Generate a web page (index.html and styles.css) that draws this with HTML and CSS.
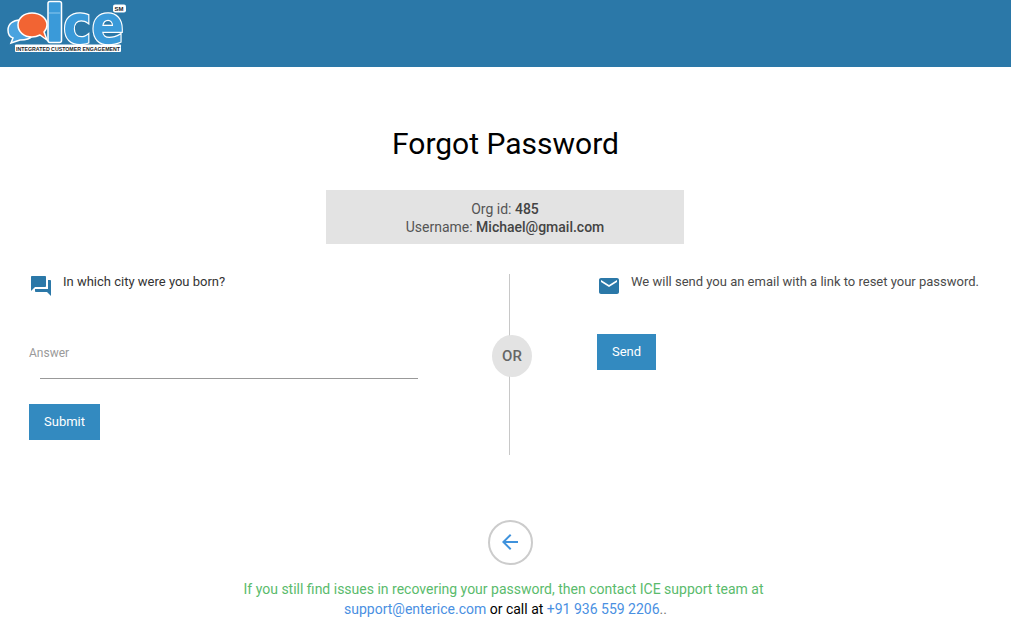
FILE: index.html
```html
<!DOCTYPE html>
<html lang="en">
<head>
  <meta charset="UTF-8">
  <title>Forgot Password</title>
  <link rel="stylesheet" href="styles.css">
</head>
<body>
  <header class="topbar">
    <svg class="logo" width="130" height="56" viewBox="0 0 130 56">
      <!-- blue bubble behind -->
      <path d="M20 20c-7 0-12 4-12 10 0 4 2 7 5 8l-2 5 9-3c4 0 10-1 12-4z" fill="#4aa3df" stroke="#fff" stroke-width="1.500"/>
      <!-- orange bubble -->
      <path d="M32 13c-8 0-14 5-14 12s6 12 14 12c3 0 6-1 8-2l7 5-3-8c2-2 3-4 3-7 0-7-7-12-15-12z" fill="#f26433" stroke="#fff" stroke-width="1.500"/>
      <rect x="48" y="1.500" width="13.500" height="41" rx="2" fill="#3a9ad9" stroke="#fff" stroke-width="1.500"/>
      <path d="M49 13h11" stroke="#8cc8ee" stroke-width="1"/>
      <text class="logo-ce" x="63" y="43" textLength="61" lengthAdjust="spacingAndGlyphs">ce</text>
      <rect x="15" y="44.500" width="106" height="7.500" rx="1" fill="#fff"/>
      <text class="logo-tag" x="16" y="50.500" textLength="104" lengthAdjust="spacingAndGlyphs">INTEGRATED CUSTOMER ENGAGEMENT</text>
      <rect x="113" y="4.500" width="13" height="8" rx="2" fill="#fff"/>
      <text class="logo-sm" x="114.500" y="11">SM</text>
    </svg>
  </header>

  <main class="page">
    <h1 class="title">Forgot Password</h1>

    <div class="org-box">
      <div>Org id: <b>485</b></div>
      <div>Username: <b>Michael@gmail.com</b></div>
    </div>

    <section class="options">
      <div class="col-left">
        <div class="hint">
          <svg width="24" height="24" viewBox="0 0 24 24"><path fill="#2b78a8" d="M21 6h-2v9H6v2c0 .55.45 1 1 1h11l4 4V7c0-.55-.45-1-1-1zm-4 6V3c0-.55-.45-1-1-1H3c-.55 0-1 .45-1 1v14l4-4h10c.55 0 1-.45 1-1z"/></svg>
          <span>In which city were you born?</span>
        </div>
        <label class="answer-label">Answer</label>
        <div class="answer-line"></div>
        <button class="btn btn-submit">Submit</button>
      </div>

      <div class="divider">
        <span class="or">OR</span>
      </div>

      <div class="col-right">
        <div class="hint hint-mail">
          <svg width="24" height="24" viewBox="0 0 24 24"><path fill="#2b78a8" d="M20 4H4c-1.100 0-1.990.9-1.990 2L2 18c0 1.100.9 2 2 2h16c1.100 0 2-.9 2-2V6c0-1.100-.9-2-2-2zm0 4l-8 5-8-5V6l8 5 8-5v2z"/></svg>
          <span>We will send you an email with a link to reset your password.</span>
        </div>
        <button class="btn btn-send">Send</button>
      </div>
    </section>

    <a class="back" href="#">
      <svg class="back-arrow" width="24" height="24" viewBox="0 0 24 24"><path fill="#3f92dc" d="M20 11H7.830l5.590-5.590L12 4l-8 8 8 8 1.410-1.410L7.830 13H20v-2z"/></svg>
    </a>

    <p class="support">
      <span class="green">If you still find issues in recovering your password, then contact ICE support team at</span><br>
      <a href="#">support@enterice.com</a> or call at <a href="#">+91 936 559 2206</a><span class="dots">..</span>
    </p>
  </main>
</body>
</html>
```

FILE: styles.css
```css
body {
  margin: 0;
  font-family: Roboto, sans-serif;
  font-size: 14px;
  color: #333;
  background: #fff;
}

.topbar {
  height: 67px;
  background: #2b78a8;
}

.logo {
  display: block;
}

.logo-ce {
  font-family: "DejaVu Sans", sans-serif;
  font-size: 54px;
  font-weight: 700;
  fill: #3a9ad9;
  stroke: #fff;
  stroke-width: 2.500px;
  paint-order: stroke;
}

.logo-tag {
  font-family: "Liberation Sans", sans-serif;
  font-size: 5.600px;
  font-weight: 700;
  fill: #222;
}

.logo-sm {
  font-family: "Liberation Sans", sans-serif;
  font-size: 6px;
  font-weight: 700;
  fill: #222;
}

.title {
  margin: 59px 0 0;
  font-size: 30px;
  line-height: 36px;
  font-weight: 400;
  text-align: center;
  color: #000;
}

.org-box {
  width: 358px;
  margin: 28px 0 0 326px;
  padding: 10px 0 8px;
  font-size: 14px;
  line-height: 18px;
  text-align: center;
  background: #e3e3e3;
  color: #555;
}

.org-box b {
  font-weight: 500;
  color: #444;
}

.options {
  display: grid;
  grid-template-columns: 480px 59px 1fr;
  margin-top: 30px;
  height: 181px;
}

.col-left {
  padding-left: 29px;
}

.col-right {
  padding-left: 58px;
}

.hint {
  display: flex;
  gap: 10px;
  line-height: 15px;
  font-size: 13px;
}

.hint-mail {
  color: #4a4a4a;
}

.answer-label {
  display: block;
  margin-top: 47px;
  font-size: 12px;
  line-height: 16px;
  color: #9a9a9a;
}

.answer-line {
  width: 378px;
  margin: 17px 0 0 11px;
  border-bottom: 1px solid #999;
}

.btn {
  display: block;
  height: 36px;
  padding: 0 0 2px;
  border: none;
  background: #338ac0;
  color: #fff;
  font-family: Roboto, sans-serif;
  font-size: 13px;
  font-weight: 400;
  cursor: pointer;
}

.btn-submit {
  width: 71px;
  margin-top: 25px;
}

.btn-send {
  width: 59px;
  margin-top: 36px;
}

.divider {
  display: flex;
  justify-content: center;
  position: relative;
}

.divider::before {
  content: "";
  position: absolute;
  top: 0;
  bottom: 0;
  left: 29px;
  width: 1px;
  background: #c8c8c8;
}

.or {
  position: relative;
  width: 40px;
  height: 42px;
  margin: 61px 0 0 5px;
  border-radius: 50%;
  background: #e3e3e3;
  color: #666;
  font-size: 15px;
  font-weight: 500;
  line-height: 42px;
  text-align: center;
}

.back {
  display: flex;
  align-items: center;
  justify-content: center;
  width: 41px;
  height: 41px;
  margin: 65px 0 0 488px;
  border: 2px solid #ccc;
  border-radius: 50%;
}

.back-arrow {
  margin: 0 2px 2px 0;
}

.support {
  margin: 14px 0 0;
  font-size: 14px;
  line-height: 20px;
  text-align: center;
  color: #000;
}

.green {
  display: inline-block;
  margin-right: 4px;
  color: #5abb6c;
}

.support a {
  color: #4a90e2;
  text-decoration: none;
}

.dots {
  color: #777;
}
```
